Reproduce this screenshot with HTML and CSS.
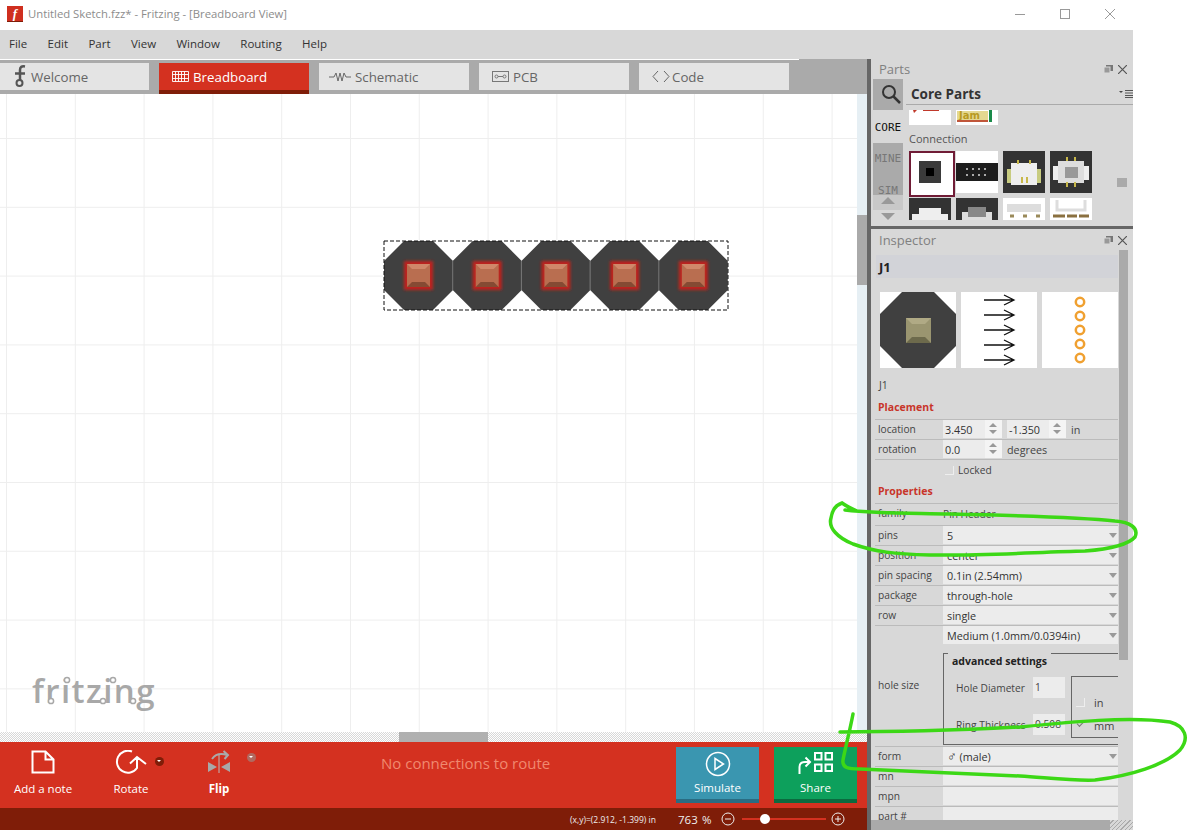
FILE: index.html
```html
<!DOCTYPE html>
<html lang="en">
<head>
  <meta charset="UTF-8" />
  <title>Untitled Sketch.fzz* - Fritzing - [Breadboard View]</title>
  <link rel="stylesheet" href="styles.css">
</head>
<body>

<div class="window">
  <header class="titlebar">
    <div class="app-icon">f</div>
    <div class="title-text">Untitled Sketch.fzz* - Fritzing - [Breadboard View]</div>
    <div class="win-btns">
      <svg width="10" height="10" viewBox="0 0 10 10"><path d="M0 5.5H10" stroke="#999" fill="none"/></svg>
      <svg width="10" height="10" viewBox="0 0 10 10"><rect x=".5" y=".5" width="9" height="9" stroke="#999" fill="none"/></svg>
      <svg width="10" height="10" viewBox="0 0 10 10"><path d="M0 0L10 10M10 0L0 10" stroke="#999" fill="none"/></svg>
    </div>
  </header>

  <nav class="menubar">
    <span>File</span><span>Edit</span><span>Part</span><span>View</span><span>Window</span><span>Routing</span><span>Help</span>
  </nav>

  <div class="workspace">
    <div class="center">
      <div class="tabs">
        <div class="tab tab-welcome">
          <svg width="12" height="26" viewBox="0 0 12 26"><path d="M11 2.500Q6 1.500 6 6V16M1 9.500H11" stroke="#555" stroke-width="2.500" fill="none"/><circle cx="5.500" cy="19" r="3" stroke="#555" stroke-width="2" fill="none"/></svg>
          Welcome
        </div>
        <div class="tab active">
          <svg width="17" height="11" viewBox="0 0 17 11"><path d="M.5.5h16v10H.5zM3.5.5v10M6.5.5v10M9.5.5v10M12.5.5v10M.5 3.5h16M.5 7.5h16" stroke="#fff" fill="none" opacity=".9"/></svg>
          Breadboard
        </div>
        <div class="tab tab-schematic">
          <svg width="22" height="10" viewBox="0 0 22 10"><path d="M0 5H5L7 1L9 9L11 1L13 9L15 1L17 5H22" stroke="#666" fill="none"/></svg>
          Schematic
        </div>
        <div class="tab">
          <svg width="17" height="11" viewBox="0 0 17 11"><rect x=".5" y=".5" width="16" height="10" stroke="#777" fill="none"/><circle cx="4.5" cy="5.5" r="1.5" stroke="#777" fill="none"/><circle cx="12.5" cy="5.5" r="1.5" stroke="#777" fill="none"/><path d="M6 5.5H11" stroke="#777"/></svg>
          PCB
        </div>
        <div class="tab tab-code">
          <svg width="18" height="13" viewBox="0 0 18 13"><path d="M6 1L1 6.5L6 12M12 1L17 6.5L12 12" stroke="#666" fill="none"/></svg>
          Code
        </div>
      </div>

      <div class="view">
        <div class="canvas">
          <svg class="header-part" width="346" height="71" viewBox="-1 -1 346 71">
            <defs>
              <filter id="glow" x="-30%" y="-30%" width="160%" height="160%"><feGaussianBlur stdDeviation="1.500"/></filter>
              <g id="pin">
                <polygon points="20,0 49,0 69,20 69,49 49,69 20,69 0,49 0,20" fill="#404040"/>
                <rect x="20" y="20" width="29" height="29" fill="#c0201a" filter="url(#glow)"/>
                <rect x="23" y="23" width="23" height="23" fill="#b96e50"/>
                <polygon points="23,23 46,23 41,28 28,28" fill="#d0886a"/>
                <polygon points="23,46 46,46 41,41 28,41" fill="#854a33"/>
              </g>
            </defs>
            <use href="#pin" x="0"/>
            <use href="#pin" x="68.7"/>
            <use href="#pin" x="137.4"/>
            <use href="#pin" x="206.1"/>
            <use href="#pin" x="274.8"/>
            <path d="M68.700 20V49M137.400 20V49M206.100 20V49M274.800 20V49" stroke="#777"/>
            <rect x="0" y="0" width="344" height="69" fill="none" stroke="#111" stroke-dasharray="4 2"/>
          </svg>
          <div class="logo">fritzing
            <svg class="logo-dots" width="110" height="30" viewBox="0 0 110 30">
              <g fill="#fff" stroke="#a8a8a8" stroke-width="1.500">
                <circle cx="34" cy="4" r="2.600"/>
                <circle cx="80" cy="4" r="2.600"/>
                <circle cx="18" cy="25" r="2.600"/>
                <circle cx="70" cy="25" r="2.600"/>
                <circle cx="100" cy="25" r="2.600"/>
              </g>
            </svg>
          </div>
        </div>
        <div class="vscroll"><div class="vthumb"></div></div>
      </div>

      <div class="hscroll"><div class="hthumb"></div></div>

      <div class="toolbar">
        <div class="tool tool-note">
          <svg width="24" height="24" viewBox="0 0 24 24"><path d="M1.5 1.5H14.5L22.5 9.5V22.5H1.5ZM14.5 1.5V9.5H22.5" stroke="#fff" stroke-width="2" fill="none"/></svg>
          <span>Add a note</span>
        </div>
        <div class="tool tool-rotate">
          <svg width="32" height="24" viewBox="0 0 32 24"><path d="M17 1.500A11 11 0 1 0 22 18V7M15 13.500L22 7L31 14" stroke="#fff" stroke-width="2" fill="none"/></svg>
          <span>Rotate</span>
          <i class="drop-dot"></i>
        </div>
        <div class="tool tool-flip">
          <svg width="24" height="24" viewBox="0 0 24 24"><path d="M1 12L10 17L1 22ZM23 12L14 17L23 22Z" fill="#a8a8a8"/><path d="M12 5V23" stroke="#bbb"/><path d="M5 9Q10 2 20 5M16.500 1L21 5L17.500 9" stroke="#aaa" stroke-width="2" fill="none"/></svg>
          <span>Flip</span>
          <i class="drop-dot dim"></i>
        </div>
        <div class="route-msg">No connections to route</div>
        <div class="action simulate">
          <svg width="26" height="26" viewBox="0 0 26 26"><circle cx="13" cy="13" r="11.500" stroke="#fff" stroke-width="1.500" fill="none"/><path d="M10 7.500L18.500 13L10 18.500Z" stroke="#fff" stroke-width="1.500" fill="none"/></svg>
          <span>Simulate</span>
        </div>
        <div class="action share">
          <svg width="36" height="26" viewBox="0 0 36 26"><path d="M1.500 23V16Q1.500 11 7 11H11M7.500 6.500L12 11L7.500 15.500" stroke="#fff" stroke-width="2" fill="none"/><path d="M17 2h6.500v6.500H17zM27.500 2H34v6.500h-6.500zM17 13.500h6.500V20H17zM27.500 13.500H34V20h-6.500z" stroke="#fff" stroke-width="2" fill="none"/></svg>
          <span>Share</span>
        </div>
      </div>

      <div class="statusbar">
        <span class="coords">(x,y)=(2.912, -1.399) in</span>
        <span class="zoom-val">763</span><span class="zoom-pct">%</span>
        <svg class="zoom-btn" width="14" height="14" viewBox="0 0 14 14"><circle cx="7" cy="7" r="6" stroke="#eee" fill="none"/><path d="M4 7H10" stroke="#eee"/></svg>
        <div class="slider"><i class="knob"></i></div>
        <svg class="zoom-btn" width="14" height="14" viewBox="0 0 14 14"><circle cx="7" cy="7" r="6" stroke="#eee" fill="none"/><path d="M4 7H10M7 4V10" stroke="#eee"/></svg>
      </div>
    </div>

    <div class="docks">
      <section class="parts">
        <div class="dock-head">
          <span>Parts</span>
          <div class="dock-btns">
            <svg width="9" height="8" viewBox="0 0 9 8"><rect x="2" y="0" width="7" height="6" fill="#777"/><rect x="0" y="2" width="6" height="6" fill="#999" stroke="#d8d8d8"/></svg>
            <svg width="9" height="9" viewBox="0 0 9 9"><path d="M0 0L9 9M9 0L0 9" stroke="#555" stroke-width="1.200"/></svg>
          </div>
        </div>
        <div class="parts-body">
          <div class="bin-tabs">
            <div class="bin-search">
              <svg width="20" height="20" viewBox="0 0 20 20"><circle cx="8" cy="8" r="6" stroke="#333" stroke-width="2" fill="none"/><path d="M12.500 12.500L19 19" stroke="#333" stroke-width="2.500"/></svg>
            </div>
            <div class="bin-tab current">CORE</div>
            <div class="bin-tab">MINE</div>
            <div class="bin-tab">SIM</div>
            <div class="bin-arrows"><i class="arr-up"></i><i class="arr-down"></i></div>
          </div>
          <div class="bin">
            <div class="bin-head">
              <span>Core Parts</span>
              <svg width="14" height="8" viewBox="0 0 14 8"><path d="M0 1H4L2 3Z" fill="#444"/><path d="M6 .5H14M6 3H14M6 5.500H14M6 7.500H14" stroke="#555"/></svg>
            </div>
            <div class="bin-scroll">
              <div class="thumbs thumbs-top">
                <div class="thumb white"><svg width="42" height="15"><path d="M4 0H8L5 3ZM14 0H30V1H14Z" fill="#c0392b"/></svg></div>
                <div class="thumb white"><svg width="42" height="15"><rect x="1" y="1" width="31" height="9" fill="#e4d890"/><text x="3" y="9" class="jam">Jam</text><rect x="1" y="10" width="31" height="2" fill="#c0563a"/><rect x="33" y="0" width="3" height="12" fill="#1a8a4a"/></svg></div>
              </div>
              <div class="bin-label">Connection</div>
              <div class="thumbs">
                <div class="thumb white selected"><svg width="42" height="42" viewBox="0 0 42 42"><rect x="8" y="8" width="22" height="22" fill="#3a3a3a"/><rect x="15" y="15" width="8" height="8" fill="#000"/></svg></div>
                <div class="thumb white"><svg width="42" height="42" viewBox="0 0 42 42"><rect y="12" width="42" height="18" fill="#1d1d1d"/><path d="M10 18H34M10 24H34" stroke="#aaa" stroke-dasharray="2 4" stroke-width="2"/></svg></div>
                <div class="thumb dark"><svg width="42" height="42" viewBox="0 0 42 42"><rect x="4" y="18" width="34" height="14" fill="#c8cc80"/><rect x="8" y="12" width="26" height="22" fill="#eee"/><path d="M15 9V13M27 9V13M19 26V32M24 26V32" stroke="#c8b84a" stroke-width="2"/></svg></div>
                <div class="thumb dark"><svg width="42" height="42" viewBox="0 0 42 42"><rect x="3" y="15" width="36" height="14" fill="#eee"/><rect x="8" y="10" width="26" height="22" fill="#ddd"/><rect x="15" y="16" width="13" height="11" fill="#999"/><path d="M17 6V10M25 6V10M17 31V36M25 31V36" stroke="#c8b84a" stroke-width="2"/></svg></div>
              </div>
              <div class="thumbs">
                <div class="thumb dark"><svg width="42" height="42" viewBox="0 0 42 42"><rect x="3" y="16" width="36" height="20" fill="#eee"/><rect x="10" y="10" width="22" height="10" fill="#eee"/></svg></div>
                <div class="thumb dark"><svg width="42" height="42" viewBox="0 0 42 42"><rect x="6" y="14" width="30" height="20" fill="#ddd"/><rect x="12" y="9" width="18" height="10" fill="#888"/></svg></div>
                <div class="thumb white"><svg width="42" height="42" viewBox="0 0 42 42"><rect x="4" y="6" width="34" height="8" fill="#ddd"/><path d="M7 18H11M20 18H24M33 18H37" stroke="#9a8a5a" stroke-width="3"/></svg></div>
                <div class="thumb white"><svg width="42" height="42" viewBox="0 0 42 42"><path d="M7 2V12H35V2" stroke="#ddd" stroke-width="3" fill="none"/><path d="M3 18H15M17 18H27M29 18H39" stroke="#8a7040" stroke-width="3"/></svg></div>
              </div>
            </div>
          </div>
          <i class="parts-thumb"></i>
        </div>
      </section>

      <section class="inspector">
        <div class="dock-head">
          <span>Inspector</span>
          <div class="dock-btns">
            <svg width="9" height="8" viewBox="0 0 9 8"><rect x="2" y="0" width="7" height="6" fill="#777"/><rect x="0" y="2" width="6" height="6" fill="#999" stroke="#d8d8d8"/></svg>
            <svg width="9" height="9" viewBox="0 0 9 9"><path d="M0 0L9 9M9 0L0 9" stroke="#555" stroke-width="1.200"/></svg>
          </div>
        </div>
        <div class="insp-main">
          <div class="insp-body">
            <div class="part-title">J1</div>
            <div class="part-images">
              <svg width="76" height="76" viewBox="0 0 76 76">
                <rect width="76" height="76" fill="#fff"/>
                <polygon points="22,0 54,0 76,22 76,54 54,76 22,76 0,54 0,22" fill="#404040"/>
                <rect x="26" y="26" width="25" height="25" fill="#9a9570"/>
                <polygon points="26,26 51,26 45,32 32,32" fill="#b0aa85"/>
                <polygon points="26,51 51,51 45,45 32,45" fill="#6d6a4c"/>
              </svg>
              <svg width="76" height="76" viewBox="0 0 76 76">
                <rect width="76" height="76" fill="#fff"/>
                <g stroke="#111" stroke-width="1.300" fill="none">
                  <path d="M23 8H53M43 3L53 8L43 13"/>
                  <path d="M23 23H53M43 18L53 23L43 28"/>
                  <path d="M23 38H53M43 33L53 38L43 43"/>
                  <path d="M23 53H53M43 48L53 53L43 58"/>
                  <path d="M23 68H53M43 63L53 68L43 73"/>
                </g>
              </svg>
              <svg width="76" height="76" viewBox="0 0 76 76">
                <rect width="76" height="76" fill="#fff"/>
                <g stroke="#f0a030" stroke-width="2.500" fill="none">
                  <circle cx="38" cy="10" r="4.200"/>
                  <circle cx="38" cy="24" r="4.200"/>
                  <circle cx="38" cy="38" r="4.200"/>
                  <circle cx="38" cy="52" r="4.200"/>
                  <circle cx="38" cy="66" r="4.200"/>
                </g>
              </svg>
            </div>
            <div class="part-label">J1</div>

            <h3 class="section">Placement</h3>
            <div class="prop top-line">
              <label>location</label>
              <div class="val-row">
                <div class="spin">3.450<i class="spin-arrows"></i></div>
                <div class="spin">-1.350<i class="spin-arrows"></i></div>
                <span>in</span>
              </div>
            </div>
            <div class="prop">
              <label>rotation</label>
              <div class="val-row">
                <div class="spin">0.0<i class="spin-arrows"></i></div>
                <span>degrees</span>
              </div>
            </div>
            <div class="locked"><i class="check"></i>Locked</div>

            <h3 class="section props-head">Properties</h3>
            <div class="prop top-line prop-tall"><label>family</label><div class="plain">Pin Header</div></div>
            <div class="prop"><label>pins</label><div class="select">5</div></div>
            <div class="prop"><label>position</label><div class="select">center</div></div>
            <div class="prop"><label>pin spacing</label><div class="select">0.1in (2.54mm)</div></div>
            <div class="prop"><label>package</label><div class="select">through-hole</div></div>
            <div class="prop"><label>row</label><div class="select">single</div></div>
            <div class="prop prop-hole">
              <label>hole size</label>
              <div class="hole">
                <div class="select">Medium (1.0mm/0.0394in)</div>
                <div class="advanced">
                  <div class="adv-title">advanced settings</div>
                  <div class="adv-inner">
                    <div class="adv-fields">
                      <div class="adv-field"><span>Hole Diameter</span><b class="adv-input">1</b></div>
                      <div class="adv-field"><span>Ring Thickness</span><b class="adv-input">0.508</b></div>
                    </div>
                    <div class="units">
                      <div><i class="check"></i>in</div>
                      <div><i class="check tick"></i>mm</div>
                    </div>
                  </div>
                </div>
              </div>
            </div>
            <div class="prop"><label>form</label><div class="select"><span class="sym">♂</span> (male)</div></div>
            <div class="prop"><label>mn</label><div class="field"></div></div>
            <div class="prop"><label>mpn</label><div class="field"></div></div>
            <div class="prop"><label>part #</label><div class="field"></div></div>
          </div>
          <div class="insp-scroll"><i></i></div>
        </div>
        <div class="insp-bottom"><i></i><b class="grip"></b></div>
      </section>
    </div>
  </div>
</div>

<!-- marker scribbles drawn on top of the screenshot -->
<svg class="scribble" width="1193" height="830" viewBox="0 0 1193 830">
  <path d="M857 511C850 508 846 506 842 503C836 505 832 511 831 518C828 528 838 538 853 544C875 552 895 554 930 555C980 556 1040 552 1085 551C1110 549 1128 545 1135 537C1139 528 1130 522 1115 521C1080 517 1000 515 950 514C920 513 880 514 845 510" fill="none" stroke="#3cd816" stroke-width="3.500" stroke-linecap="round"/>
  <path d="M853 714C850 730 846 745 843 760C842 768 848 769 860 769C900 771 960 773 1020 776C1050 778 1075 781 1095 780C1130 776 1165 765 1180 750C1190 738 1185 726 1170 722C1130 716 1070 722 1020 727C960 730 890 732 840 732" fill="none" stroke="#3cd816" stroke-width="3.500" stroke-linecap="round"/>
</svg>

</body>
</html>
```

FILE: styles.css
```css
* {
  box-sizing: border-box;
}
body {
  margin: 0;
  background: #fff;
  font-family: "Open Sans", "Noto Sans", sans-serif;
  overflow: hidden;
  height: 830px;
  position: relative;
}
.window {
  width: 1133px;
  height: 830px;
  display: flex;
  flex-direction: column;
}

/* title bar */
.titlebar {
  height: 30px;
  display: flex;
  align-items: center;
  padding-left: 7px;
  background: #fff;
}
.app-icon {
  width: 16px;
  height: 16px;
  margin-top: -2px;
  background: #cf2f1f;
  border-bottom: 1px solid #7f1d08;
  color: #fff;
  font: italic bold 13px/15px "Liberation Serif", serif;
  text-align: center;
}
.title-text {
  margin-left: 5px;
  font-size: 11.3px;
  color: #8c8c8c;
  margin-top: -3px;
}
.win-btns {
  margin-left: auto;
  display: flex;
  gap: 35px;
  padding-right: 18px;
  margin-top: -2px;
}

/* menu */
.menubar {
  height: 29px;
  background: #d8d8d8;
  display: flex;
  align-items: center;
  gap: 20.4px;
  padding: 0 0 3px 9px;
  font-size: 11.5px;
  color: #333;
}

.workspace {
  flex: 1;
  display: flex;
  min-height: 0;
}
.center {
  width: 867px;
  display: flex;
  flex-direction: column;
}

/* view tabs */
.tabs {
  height: 35px;
  padding-top: 4px;
  display: flex;
  gap: 10px;
  background: linear-gradient(#fff, #fff) 0 0 / 799px 1px no-repeat, #aaa;
}
.tab {
  width: 150px;
  height: 31px;
  border-bottom: 4px solid #aaa;
  background: #e4e4e4;
  display: flex;
  align-items: center;
  gap: 4px;
  padding-left: 13px;
  font-size: 13.3px;
  color: #666;
}
.tab-welcome {
  width: 149px;
  padding-left: 14px;
  gap: 5px;
}
.tab-schematic {
  padding-left: 10px;
}
.tab-code {
  gap: 2px;
}
.tab.active {
  background: #d43120;
  border-bottom-color: #7f1d08;
  color: #fff;
}

/* canvas */
.view {
  flex: 1;
  display: flex;
  min-height: 0;
}
.canvas {
  flex: 1;
  position: relative;
  overflow: hidden;
  background-color: #fff;
  background-image:
    linear-gradient(#eee 1px, transparent 1px),
    linear-gradient(90deg, #eee 1px, transparent 1px);
  background-size: 68.8px 68.8px;
  background-position: 6px 44px;
}
.header-part {
  position: absolute;
  left: 383px;
  top: 146px;
}
.logo {
  position: absolute;
  left: 32px;
  top: 574px;
  font: 600 33px "Open Sans", sans-serif;
  color: #a8a8a8;
  letter-spacing: 1.4px;
}
.logo-dots {
  position: absolute;
  left: 1px;
  top: 8px;
}
.vscroll {
  width: 10px;
  background: #e6eff4;
  padding-top: 121px;
}
.vthumb {
  height: 70px;
  background: #aaa;
}
.hscroll {
  height: 10px;
  background: repeating-conic-gradient(#d8d8d8 0 25%, #fff 0 50%) 0 0 / 2px 2px;
  padding-left: 399px;
}
.hthumb {
  width: 89px;
  height: 10px;
  background: #b0b0b0;
}

/* red toolbar */
.toolbar {
  height: 66px;
  background: #d43120;
  display: flex;
  align-items: flex-start;
  color: #fff;
  font-size: 11.5px;
}
.tool {
  position: relative;
  display: flex;
  flex-direction: column;
  align-items: center;
  padding-top: 8px;
  white-space: nowrap;
}
.tool svg {
  height: 24px;
}
.tool span {
  margin-top: 7px;
}
.tool-note {
  width: 58px;
  margin-left: 14px;
}
.tool-rotate {
  width: 36px;
  margin-left: 41px;
}
.tool-flip {
  width: 30px;
  margin-left: 55px;
}
.tool-flip span {
  font-weight: 700;
}
.drop-dot {
  position: absolute;
  left: 42px;
  top: 15px;
  width: 9px;
  height: 9px;
  border-radius: 50%;
  background: #7f1d08;
}
.drop-dot::after {
  content: "";
  position: absolute;
  left: 2px;
  top: 3px;
  border: 2.5px solid transparent;
  border-top-color: #fff;
}
.drop-dot.dim {
  left: 43px;
  top: 11px;
  background: #b06a60;
}
.route-msg {
  width: 170px;
  margin: 11px 0 0 147px;
  font-size: 15px;
  white-space: nowrap;
  color: #f0896f;
}
.action {
  width: 83px;
  height: 56px;
  margin-top: 5px;
  padding-top: 4px;
  display: flex;
  flex-direction: column;
  align-items: center;
  border-bottom: 4px solid;
}
.action span {
  margin-top: 3px;
}
.simulate {
  margin-left: 125px;
  background: #3a96b0;
  border-color: #2a6c82;
}
.share {
  margin-left: 15px;
  background: #0da05c;
  border-color: #0c6a3f;
}

/* status bar */
.statusbar {
  height: 22px;
  background: #7f1d08;
  display: flex;
  align-items: center;
  color: #eee;
  padding-left: 570px;
}
.coords {
  width: 108px;
  font-size: 8.5px;
  white-space: nowrap;
}
.zoom-val {
  font-size: 11.5px;
  width: 24px;
}
.zoom-pct {
  font-size: 11.5px;
  width: 19px;
}
.slider {
  position: relative;
  width: 84px;
  height: 2px;
  margin: 0 5px 0 7px;
  background: #d43120;
}
.knob {
  position: absolute;
  left: 18px;
  top: -4px;
  width: 10px;
  height: 10px;
  border-radius: 50%;
  background: #fff;
}

/* right docks */
.docks {
  width: 266px;
  border-left: 4px solid #666;
  background: #d8d8d8;
  display: flex;
  flex-direction: column;
  min-height: 0;
}
.dock-head {
  display: flex;
  align-items: center;
  justify-content: space-between;
  padding: 0 6px 0 8px;
  font-size: 13px;
  color: #808080;
}
.dock-btns {
  display: flex;
  align-items: center;
  gap: 5px;
}
.parts {
  height: 170px;
  border-bottom: 3px solid #666;
  display: flex;
  flex-direction: column;
}
.parts .dock-head {
  height: 20px;
  flex: none;
}
.parts-body {
  flex: 1;
  display: flex;
  min-height: 0;
  position: relative;
}
.bin-tabs {
  width: 30px;
  margin-left: 2px;
  background: #aaa;
  font-family: "DejaVu Sans Mono", monospace;
  font-size: 11px;
  color: #777;
  display: flex;
  flex-direction: column;
  text-align: center;
  position: relative;
  overflow: hidden;
}
.bin-search {
  height: 31px;
  padding: 5px 0 0 6px;
}
.bin-tab {
  height: 32px;
  line-height: 32px;
  flex: none;
}
.bin-tab.current {
  background: #d8d8d8;
  color: #111;
  height: 33px;
  line-height: 35px;
}
.bin-arrows {
  position: absolute;
  left: 0;
  right: 0;
  top: 116px;
  bottom: 0;
  background: linear-gradient(#c8c8c8 0 15px, #d8d8d8 15px);
}
.arr-up,
.arr-down {
  position: absolute;
  left: 8px;
  border: 7px solid transparent;
}
.arr-up {
  top: -5px;
  border-bottom-color: #999;
}
.arr-down {
  top: 18px;
  border-top-color: #999;
}
.bin {
  width: 227px;
  margin-left: 3px;
  display: flex;
  flex-direction: column;
  min-height: 0;
}
.bin-head {
  height: 26px;
  flex: none;
  display: flex;
  align-items: center;
  justify-content: space-between;
  border-bottom: 1px solid #aaa;
  padding: 4px 0 0 5px;
  font-size: 13.5px;
  font-weight: 700;
  color: #333;
}
.bin-scroll {
  height: 115px;
  overflow: hidden;
  padding: 5px 0 0 3px;
}
.thumbs {
  display: flex;
  gap: 5px;
  margin-bottom: 5px;
}
.thumbs-top .thumb {
  height: 15px;
}
.thumb {
  width: 42px;
  height: 42px;
  flex: none;
}
.thumb svg {
  display: block;
}
.jam {
  font: bold 10px "DejaVu Sans", sans-serif;
  fill: #b89a20;
}
.white {
  background: #fff;
}
.dark {
  background: #333;
}
.selected {
  width: 46px;
  height: 46px;
  margin: 0 -4px -4px 0;
  position: relative;
  z-index: 1;
  border: 2px solid #701c36;
}
.bin-label {
  height: 21px;
  font-size: 11px;
  line-height: 18px;
  color: #555;
}
.parts-thumb {
  position: absolute;
  left: 246px;
  top: 99px;
  width: 10px;
  height: 9px;
  background: #aaa;
}

/* inspector */
.inspector {
  flex: 1;
  display: flex;
  flex-direction: column;
  min-height: 0;
  font-size: 10.2px;
  color: #444;
}
.inspector .dock-head {
  height: 26px;
  flex: none;
  padding-bottom: 4px;
}
.insp-main {
  flex: 1;
  min-height: 0;
  display: flex;
}
.insp-body {
  width: 247px;
  padding-left: 4px;
  flex: none;
  overflow: hidden;
}
.part-title {
  height: 23px;
  margin-left: 1px;
  padding-left: 3px;
  background: #d2d3d8;
  font-size: 13px;
  font-weight: 700;
  line-height: 25px;
  color: #222;
}
.part-images {
  display: flex;
  gap: 5px;
  margin: 14px 0 0 5px;
  height: 76px;
}
.part-images svg {
  flex: none;
}
.part-label {
  margin: 10px 0 0 4px;
  height: 16px;
  font-size: 10.5px;
}
.section {
  margin: 6px 0 0 3px;
  height: 19px;
  font-size: 10.5px;
  font-weight: 700;
  color: #c8352a;
}
.props-head {
  margin-top: 4px;
}
.prop {
  display: flex;
  height: 20px;
  border-bottom: 1px solid #bbb;
}
.prop.top-line {
  height: 21px;
  border-top: 1px solid #bbb;
}
.prop.prop-tall {
  height: 23px;
}
.prop label {
  width: 68px;
  padding-left: 3px;
  line-height: 19px;
  flex: none;
}
.plain {
  line-height: 20px;
}
.val-row {
  display: flex;
  gap: 5px;
  align-items: flex-start;
  line-height: 19px;
  font-size: 10.8px;
}
.spin {
  position: relative;
  width: 59px;
  height: 18px;
  padding-left: 2px;
  background: #ececec;
  color: #333;
}
.spin-arrows {
  position: absolute;
  right: 0;
  top: 0;
  width: 17px;
  height: 18px;
  background: #f4f4f4;
}
.spin-arrows::before,
.spin-arrows::after {
  content: "";
  position: absolute;
  left: 4px;
  border: 4px solid transparent;
}
.spin-arrows::before {
  top: -1px;
  border-bottom-color: #999;
}
.spin-arrows::after {
  top: 10px;
  border-top-color: #999;
}
.select,
.field {
  position: relative;
  flex: 1;
  height: 18px;
  padding-left: 4px;
  background: #ececec;
  font-size: 10.8px;
  line-height: 20px;
  color: #333;
}
.select::after {
  content: "";
  position: absolute;
  right: 1px;
  top: 7px;
  border: 4px solid transparent;
  border-top: 5px solid #999;
}
.sym {
  font-size: 13px;
  line-height: 16px;
}
.locked {
  height: 20px;
  padding-left: 70px;
  display: flex;
  align-items: center;
  gap: 4px;
}
.check {
  display: inline-block;
  width: 9px;
  height: 9px;
  border-right: 1px solid #eee;
  border-bottom: 1px solid #eee;
  flex: none;
}
.prop-hole {
  height: 121px;
}
.prop-hole label {
  padding-top: 50px;
}
.hole {
  flex: 1;
  min-width: 0;
  overflow: hidden;
}
.hole .select {
  flex: none;
}
.advanced {
  margin: 9px -12px 0 0;
  height: 92px;
  border: 1px solid #666;
}
.adv-title {
  display: inline-block;
  vertical-align: top;
  margin: -1px 0 0 4px;
  padding: 1px 4px 0;
  background: #d8d8d8;
  font-size: 10.5px;
  font-weight: 700;
  line-height: 14px;
  color: #222;
}
.adv-inner {
  display: flex;
  margin-top: 8px;
}
.adv-fields {
  width: 127px;
  flex: none;
  padding: 1px 6px 0 12px;
  display: flex;
  flex-direction: column;
  gap: 16px;
}
.adv-field {
  display: flex;
  align-items: center;
  justify-content: space-between;
  height: 21px;
}
.adv-input {
  width: 32px;
  height: 21px;
  padding-left: 2px;
  background: #ececec;
  font-weight: 400;
  line-height: 21px;
}
.units {
  width: 60px;
  height: 62px;
  flex: none;
  border: 1px solid #666;
  display: flex;
  flex-direction: column;
  justify-content: space-between;
  padding: 18px 0 5px 4px;
  font-size: 11px;
}
.units div {
  display: flex;
  align-items: center;
  gap: 9px;
  height: 14px;
}
.tick {
  border: 0;
  position: relative;
}
.tick::after {
  content: "";
  position: absolute;
  left: 1px;
  top: 0;
  width: 6px;
  height: 3px;
  border-left: 1px solid #777;
  border-bottom: 1px solid #777;
  transform: rotate(-45deg);
}
.insp-scroll {
  margin-left: 1px;
  width: 9px;
}
.insp-scroll i {
  display: block;
  height: 410px;
  margin-top: -5px;
  background: #aaa;
}
.insp-bottom {
  height: 10px;
  flex: none;
  display: flex;
}
.insp-bottom i {
  width: 239px;
  background: #aaa;
}
.grip {
  flex: 1;
  background: repeating-linear-gradient(135deg, #d8d8d8 0 2px, #aaa 2px 3px);
}

/* the green marker on top */
.scribble {
  position: absolute;
  left: 0;
  top: 0;
  pointer-events: none;
}
```
